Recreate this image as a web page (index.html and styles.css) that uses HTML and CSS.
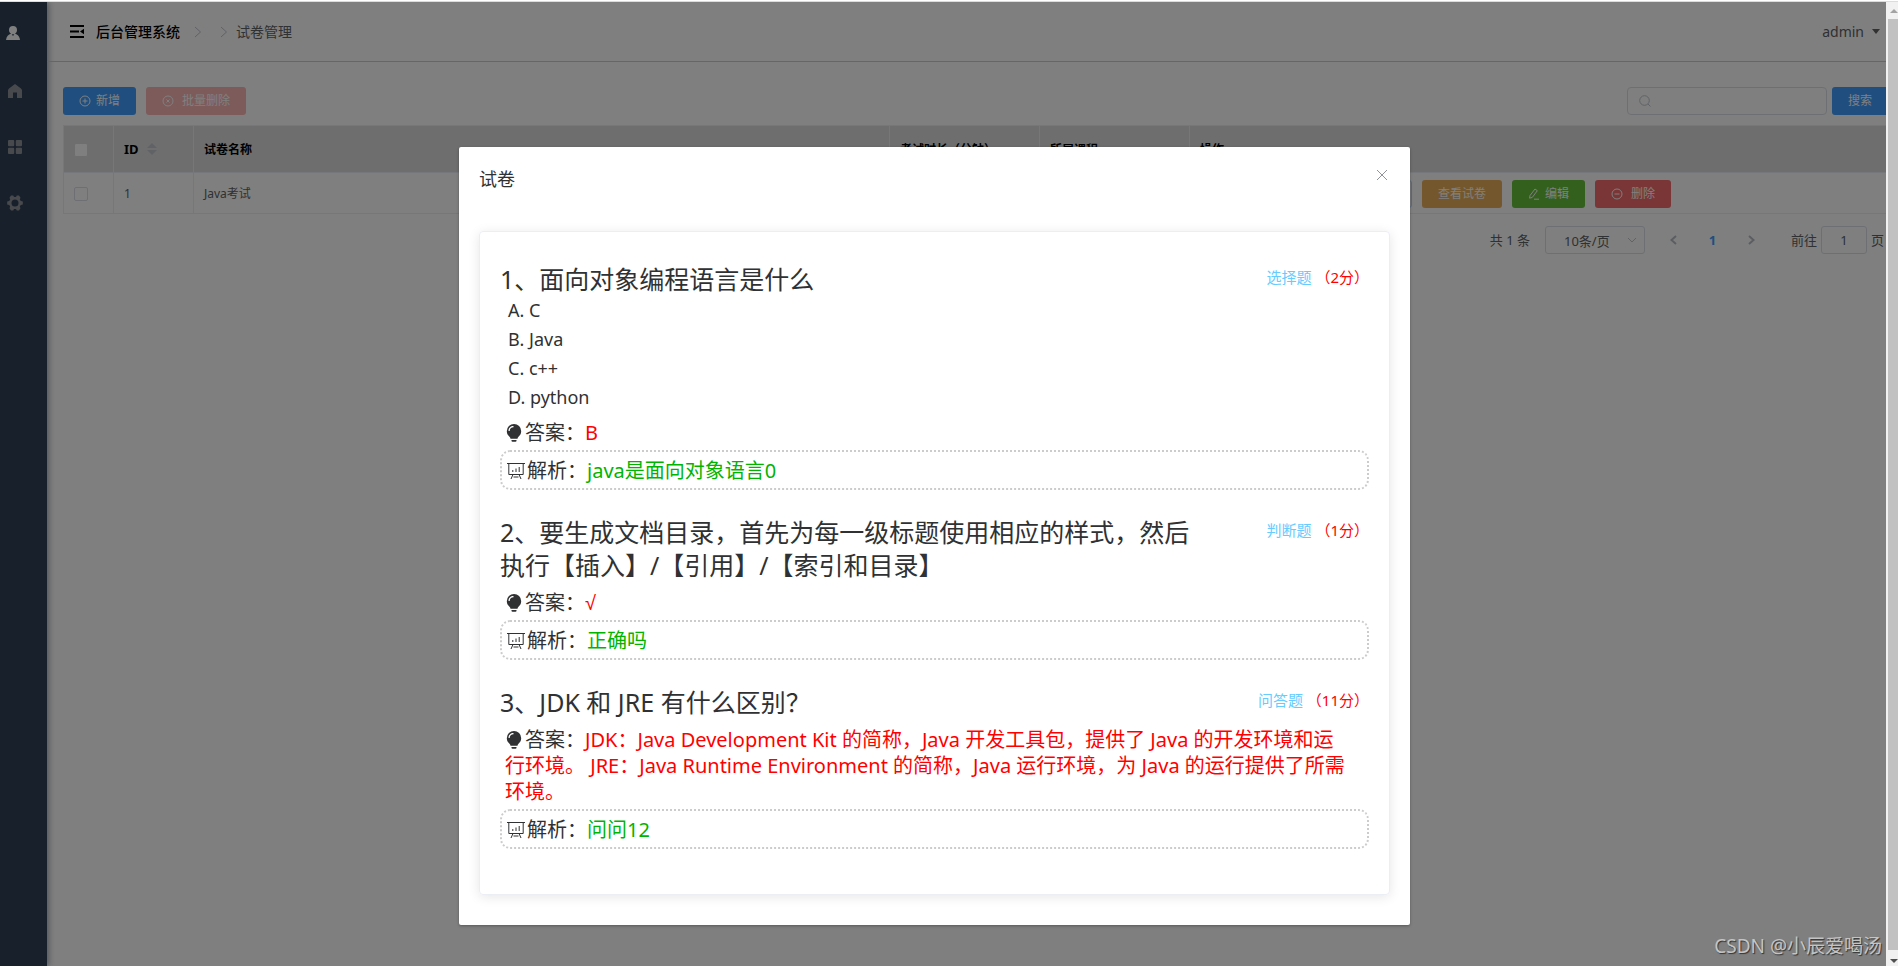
FILE: index.html
```html
<!DOCTYPE html>
<html lang="zh-CN">
<head>
<meta charset="utf-8">
<title>后台管理系统</title>
<link rel="stylesheet" href="styles.css">
</head>
<body>
<div class="window">
  <div class="app">
    <nav class="sidebar" aria-label="主菜单">
      <a class="side-link side-user" href="#" aria-label="用户"><svg width="14" height="14" viewBox="0 0 14 14"><path d="M7 0a4 4 0 0 1 4 4c0 1.600-.8 3-2 3.800 2.600.7 4.500 2.300 5 6.200H0c.5-3.900 2.400-5.500 5-6.200C3.800 7 3 5.600 3 4a4 4 0 0 1 4-4zM5.700 8.200L7 10l1.300-1.800z" fill-rule="evenodd"/></svg></a>
      <a class="side-link" href="#" aria-label="首页"><svg width="14" height="14" viewBox="0 0 14 14"><path d="M7 0l6 4.500 1 1.500v8H9V8.500H5V14H0V6l1-1.500z"/></svg></a>
      <a class="side-link" href="#" aria-label="菜单"><svg width="14" height="14" viewBox="0 0 14 14"><path d="M1 0h4.200q1 0 1 1v4.200q0 1-1 1H1q-1 0-1-1V1q0-1 1-1zM8.800 0H13q1 0 1 1v4.200q0 1-1 1H8.800q-1 0-1-1V1q0-1 1-1zM1 7.800h4.200q1 0 1 1V13q0 1-1 1H1q-1 0-1-1V8.800q0-1 1-1zM8.800 7.800H13q1 0 1 1V13q0 1-1 1H8.800q-1 0-1-1V8.800q0-1 1-1z"/></svg></a>
      <a class="side-link side-gear" href="#" aria-label="设置"><svg width="16" height="16" viewBox="0 0 16 16"><path fill-rule="evenodd" d="M4 .5h2.200L7 2h2l.8-1.500H12l1.500 2.300-.7 1.700 1 1.500 2 .5v3l-2 .5-1 1.500.7 1.700L12 15.500H9.800L9 14H7l-.8 1.500H4l-1.500-2.300.7-1.700-1-1.500-2-.5v-3l2-.5 1-1.500-.7-1.700zM8 4.500a3.500 3.500 0 1 0 0 7 3.500 3.500 0 0 0 0-7z"/></svg></a>
    </nav>

    <div class="main">
      <header class="topbar">
        <button class="fold" type="button" aria-label="折叠菜单"><svg width="14" height="13" viewBox="0 0 14 13"><path d="M0 0h14v2H0zM0 5.500h9v2H0zM0 11h14v2H0zM14 3.800v5.400L10 6.500z"/></svg></button>
        <nav class="crumbs" aria-label="面包屑">
          <a class="crumb-home" href="#">后台管理系统</a>
          <svg class="crumb-sep" width="8" height="12" viewBox="0 0 8 12"><path d="M1 1l5.500 5L1 11"/></svg>
          <svg class="crumb-sep" width="8" height="12" viewBox="0 0 8 12"><path d="M1 1l5.500 5L1 11"/></svg>
          <span>试卷管理</span>
        </nav>
        <button class="account" type="button">admin<i class="caret"></i></button>
      </header>

      <main class="content">
        <div class="toolbar">
          <button class="btn btn-primary" type="button"><svg class="ico" viewBox="0 0 12 12"><circle cx="6" cy="6" r="5"/><path d="M6 3.500v5M3.500 6h5"/></svg>新增</button>
          <button class="btn btn-muted" type="button" disabled><svg class="ico" viewBox="0 0 12 12"><circle cx="6" cy="6" r="5"/><path d="M4.500 4.500l3 3M7.500 4.500l-3 3"/></svg><span class="spaced">批量删除</span></button>
          <form class="search">
            <label class="search-box"><svg class="ico" viewBox="0 0 12 12"><circle cx="5.500" cy="5.500" r="4.800"/><path d="M9 9l2.500 2.500"/></svg><input type="text" aria-label="搜索试卷"></label>
            <button class="btn btn-primary" type="button">搜索</button>
          </form>
        </div>

        <table class="grid">
          <colgroup><col class="c-check"><col class="c-id"><col class="c-name"><col class="c-mid"><col class="c-mid"><col class="c-act"></colgroup>
          <thead>
            <tr>
              <th><input class="check check-all" type="checkbox" aria-label="全选"></th>
              <th><span class="sortable">ID<span class="sort"><i class="up"></i><i class="down"></i></span></span></th>
              <th>试卷名称</th>
              <th>考试时长（分钟）</th>
              <th>所属课程</th>
              <th>操作</th>
            </tr>
          </thead>
          <tbody>
            <tr>
              <td><input class="check" type="checkbox" aria-label="选择 Java考试"></td>
              <td>1</td>
              <td>Java考试</td>
              <td></td>
              <td></td>
              <td>
                <div class="actions">
                  <button class="btn btn-plain" type="button" aria-label="题目管理"></button>
                  <button class="btn btn-warning" type="button">查看试卷</button>
                  <button class="btn btn-success" type="button"><svg class="ico" viewBox="0 0 12 12"><path d="M2 7.500L7 1l2.300 1.700L4.300 9.400l-2.700.8zM6 11.200h5"/></svg>编辑</button>
                  <button class="btn btn-danger" type="button"><svg class="ico" viewBox="0 0 12 12"><circle cx="6" cy="6" r="5"/><path d="M3.500 6h5"/></svg><span class="spaced">删除</span></button>
                </div>
              </td>
            </tr>
          </tbody>
        </table>

        <div class="pager">
          <span class="total">共 1 条</span>
          <span class="size"><select aria-label="每页条数"><option>10条/页</option></select><svg width="10" height="6" viewBox="0 0 10 6"><path d="M1 1l4 4 4-4"/></svg></span>
          <button class="page-btn" type="button" aria-label="上一页"><svg width="7" height="10" viewBox="0 0 7 10"><path d="M6 1L1.500 5 6 9"/></svg></button>
          <button class="page-btn current" type="button">1</button>
          <button class="page-btn" type="button" aria-label="下一页"><svg width="7" height="10" viewBox="0 0 7 10"><path d="M1 1l4.500 4L1 9"/></svg></button>
          <label class="jump">前往<input type="text" value="1">页</label>
        </div>
      </main>
    </div>

    <div class="mask">
      <section class="dialog" role="dialog" aria-labelledby="dialog-title">
        <header class="dialog-head">
          <h2 id="dialog-title">试卷</h2>
          <button class="close" type="button" aria-label="关闭"><svg width="12" height="12" viewBox="0 0 12 12"><path d="M1 1l10 10M11 1L1 11"/></svg></button>
        </header>
        <div class="dialog-body">
          <div class="paper">

            <article class="question">
              <div class="stem-row">
                <h3 class="stem">1、面向对象编程语言是什么</h3>
                <p class="meta"><span class="kind">选择题</span> <span class="score">（2分）</span></p>
              </div>
              <ul class="options"><li>A. C</li><li>B. Java</li><li>C. c++</li><li>D. python</li></ul>
              <p class="answer"><svg class="bulb" viewBox="0 0 16 18"><path fill-rule="evenodd" d="M8 0a7.200 7.200 0 0 1 7.200 7.200c0 2.800-1.600 4.400-2.700 5.500-.6.700-1 1.400-1 2.100h-7c0-.7-.4-1.400-1-2.100C2.400 11.600.8 10 .8 7.200A7.200 7.200 0 0 1 8 0zM7.500 2C4.500 2 2.500 4 2.500 7h1.200c0-2.200 1.500-3.700 3.800-3.800zM5.500 16h5v.8q0 1-1 1h-3q-1 0-1-1z"/></svg>答案：<span class="value">B</span></p>
              <p class="analysis"><svg class="board" viewBox="0 0 18 18"><path d="M0 1.500h18M1.800 1.500v11h14.400v-11M6 12.500l-2 4.500M12 12.500l2 4.500M6.500 15h5M5.800 10V8M9 10V6.500M12.200 10V5"/></svg>解析：<span class="value">java是面向对象语言0</span></p>
            </article>

            <article class="question">
              <div class="stem-row">
                <h3 class="stem">2、要生成文档目录，首先为每一级标题使用相应的样式，然后执行【插入】/【引用】/【索引和目录】</h3>
                <p class="meta"><span class="kind">判断题</span> <span class="score">（1分）</span></p>
              </div>
              <p class="answer"><svg class="bulb" viewBox="0 0 16 18"><path fill-rule="evenodd" d="M8 0a7.200 7.200 0 0 1 7.200 7.200c0 2.800-1.600 4.400-2.700 5.500-.6.700-1 1.400-1 2.100h-7c0-.7-.4-1.400-1-2.100C2.400 11.600.8 10 .8 7.200A7.200 7.200 0 0 1 8 0zM7.500 2C4.500 2 2.500 4 2.500 7h1.200c0-2.200 1.500-3.700 3.800-3.800zM5.500 16h5v.8q0 1-1 1h-3q-1 0-1-1z"/></svg>答案：<span class="value mark">√</span></p>
              <p class="analysis"><svg class="board" viewBox="0 0 18 18"><path d="M0 1.500h18M1.800 1.500v11h14.400v-11M6 12.500l-2 4.500M12 12.500l2 4.500M6.500 15h5M5.800 10V8M9 10V6.500M12.200 10V5"/></svg>解析：<span class="value">正确吗</span></p>
            </article>

            <article class="question">
              <div class="stem-row">
                <h3 class="stem">3、JDK 和 JRE 有什么区别？</h3>
                <p class="meta"><span class="kind">问答题</span> <span class="score">（11分）</span></p>
              </div>
              <p class="answer"><svg class="bulb" viewBox="0 0 16 18"><path fill-rule="evenodd" d="M8 0a7.200 7.200 0 0 1 7.200 7.200c0 2.800-1.600 4.400-2.700 5.500-.6.700-1 1.400-1 2.100h-7c0-.7-.4-1.400-1-2.100C2.400 11.600.8 10 .8 7.200A7.200 7.200 0 0 1 8 0zM7.500 2C4.500 2 2.500 4 2.500 7h1.200c0-2.200 1.500-3.700 3.800-3.800zM5.500 16h5v.8q0 1-1 1h-3q-1 0-1-1z"/></svg>答案：<span class="value">JDK：Java Development Kit 的简称，Java 开发工具包，提供了 Java 的开发环境和运行环境。 JRE：Java Runtime Environment 的简称，Java 运行环境，为 Java 的运行提供了所需环境。</span></p>
              <p class="analysis"><svg class="board" viewBox="0 0 18 18"><path d="M0 1.500h18M1.800 1.500v11h14.400v-11M6 12.500l-2 4.500M12 12.500l2 4.500M6.500 15h5M5.800 10V8M9 10V6.500M12.200 10V5"/></svg>解析：<span class="value">问问12</span></p>
            </article>

          </div>
        </div>
      </section>
    </div>
    <span class="watermark">CSDN @小辰爱喝汤</span>
  </div>

  <div class="scrollbar" aria-hidden="true">
    <i class="arrow-up"></i>
    <span class="thumb"></span>
    <i class="arrow-down"></i>
  </div>
</div>
</body>
</html>
```
FILE: styles.css
```css
* { box-sizing: border-box; }

body {
  margin: 0;
  font-family: "Noto Sans", "Noto Sans CJK SC", sans-serif;
  font-size: 14px;
  color: #606266;
  background: #fff;
}

h2, h3, p, ul { margin: 0; padding: 0; font-weight: 400; }
ul { list-style: none; }
a { color: inherit; text-decoration: none; }
button, input, select { font: inherit; color: inherit; }
button { padding: 0; border: 0; background: none; }
svg { flex: none; }

.window {
  display: flex;
  height: 100vh;
  padding-top: 2px;
  background: linear-gradient(#fff 1px, #dcdcdc 1px, #dcdcdc 2px, #fff 2px);
  overflow: hidden;
}

.app { position: relative; flex: 1; display: flex; min-width: 0; overflow: hidden; }

/* sidebar */
.sidebar {
  width: 47px;
  padding: 0 8px;
  background: #304156;
  box-shadow: 2px 0 6px rgba(0, 21, 41, .35);
}
.side-link { display: flex; align-items: center; height: 56px; }
.side-link svg { fill: #909399; }
.side-user { height: 61px; margin-left: -2px; }
.side-user svg { fill: #fff; }
.side-gear { margin-left: -1px; }

/* top bar */
.main { flex: 1; min-width: 0; }
.topbar {
  display: flex;
  align-items: center;
  height: 60px;
  padding: 0 6px 0 23px;
  border-bottom: 1px solid #ccc;
}
.fold { display: flex; margin-right: 12px; fill: #000; }
.crumbs { display: flex; align-items: center; line-height: 20px; }
.crumb-home { color: #000; font-weight: 500; margin-right: 14px; }
.crumb-sep { fill: none; stroke: #c0c4cc; margin-right: 18px; }
.crumb-sep + span { margin-left: -10px; }
.account { display: flex; align-items: center; gap: 8px; margin-left: auto; font-size: 14px; }
.caret { border: 4px solid transparent; border-top: 5px solid #606266; border-bottom: 0; }

.content { padding: 25px 0 0 16px; }

/* buttons */
.btn {
  display: inline-flex;
  align-items: center;
  justify-content: center;
  gap: 5px;
  height: 28px;
  padding: 0 16px;
  border-radius: 3px;
  font-size: 12px;
  line-height: 16px;
  color: #fff;
  white-space: nowrap;
}
.ico { width: 12px; height: 12px; fill: none; stroke: currentColor; }
.btn-primary { background: #409eff; }
.btn-muted { background: #fab6b6; }
.btn-warning { background: #e9ae5b; }
.btn-success { background: #67c23a; }
.btn-danger { background: #f56c6c; }
.btn-plain { width: 80px; background: #ecf5ff; border: 1px solid #b3d8ff; }
.spaced { margin-left: 3px; }

.toolbar { display: flex; gap: 10px; margin-bottom: 10px; }
.search { display: flex; gap: 5px; margin: 0 -2px 0 auto; }
.search-box {
  display: flex;
  align-items: center;
  width: 200px;
  padding-left: 11px;
  border: 1px solid #dcdfe6;
  border-radius: 4px;
  color: #c0c4cc;
}
.search-box input { flex: 1; min-width: 0; border: 0; background: none; outline: 0; }

/* table */
.grid {
  width: 100%;
  table-layout: fixed;
  border-collapse: separate;
  border-spacing: 0;
  border-top: 1px solid #ebeef5;
  border-left: 1px solid #ebeef5;
  font-size: 12px;
  line-height: 22px;
}
.c-check { width: 50px; }
.c-id { width: 80px; }
.c-name { width: auto; }
.c-mid { width: 150px; }
.c-act { width: 696px; }
.grid th, .grid td {
  padding: 1px 10px 0;
  border-right: 1px solid #ebeef5;
  border-bottom: 1px solid #ebeef5;
  text-align: left;
  white-space: nowrap;
}
.grid th:last-child, .grid td:last-child { border-right: 0; }
.grid th { height: 47px; background: #ddd; color: #000; font-weight: 700; }
.grid td { height: 41px; }
.check {
  appearance: none;
  display: block;
  width: 14px;
  height: 14px;
  margin: 0;
  border: 1px solid #dcdfe6;
  border-radius: 2px;
  background: #fff;
}
.check-all { border-color: #ddd; }
.sortable { display: flex; align-items: center; gap: 8px; padding-bottom: 2px; font-size: 13px; }
.sort { display: flex; flex-direction: column; gap: 2px; }
.up, .down { border: 5px solid transparent; }
.up { border-top: 0; border-bottom-color: #c0c4cc; }
.down { border-bottom: 0; border-top-color: #c0c4cc; }
.actions { display: flex; gap: 10px; padding-left: 132px; }

/* pagination */
.pager {
  display: flex;
  align-items: center;
  justify-content: flex-end;
  margin-top: 12px;
  padding-right: 2px;
  font-size: 13px;
  line-height: 28px;
}
.size { position: relative; width: 100px; margin: 0 9px 0 15px; }
.size select {
  display: block;
  width: 100%;
  height: 28px;
  padding: 0 30px 0 18px;
  appearance: none;
  border: 1px solid #dcdfe6;
  border-radius: 3px;
  background: #fff;
}
.size svg { position: absolute; right: 8px; top: 11px; fill: none; stroke: #c0c4cc; }
.page-btn { width: 39px; height: 28px; fill: none; stroke: #b8bbc2; stroke-width: 2; }
.current { color: #409eff; font-weight: 700; }
.jump { display: flex; gap: 4px; margin-left: 20px; }
.jump input {
  width: 46px;
  height: 28px;
  border: 1px solid #dcdfe6;
  border-radius: 3px;
  background: #fff;
  text-align: center;
}

/* dialog */
.mask {
  position: absolute;
  inset: 0;
  padding: 145px 17px 0 0;
  background: rgba(0, 0, 0, .5);
}
.dialog {
  width: 951px;
  max-width: 100%;
  margin: 0 auto;
  background: #fff;
  border-radius: 2px;
  box-shadow: 0 1px 3px rgba(0, 0, 0, .3);
  color: #303133;
}
.dialog-head { display: flex; justify-content: space-between; padding: 20px 20px 10px; }
.dialog-head h2 { font-size: 18px; line-height: 24px; }
.close { display: flex; padding: 2px; fill: none; stroke: #909399; }
.dialog-body { padding: 30px 20px; }
.paper {
  display: flex;
  flex-direction: column;
  gap: 26px;
  padding: 31px 20px 45px;
  border: 1px solid #ebeef5;
  border-radius: 4px;
  box-shadow: 0 2px 12px rgba(0, 0, 0, .1);
}
.stem-row { display: flex; justify-content: space-between; }
.stem { width: 80%; font-size: 25px; line-height: 33px; }
.meta { font-size: 15px; line-height: 28px; white-space: nowrap; }
.kind { color: #66ccff; }
.score { color: #f00; }
.options { padding-left: 8px; font-size: 18px; line-height: 29px; }
.answer, .analysis { font-size: 20px; line-height: 26px; }
.answer { padding: 8px 20px 4px 5px; }
.answer .value { color: #f00; }
.answer .mark { font-family: "Liberation Sans", sans-serif; }
.bulb { width: 16px; height: 18px; margin: 0 3px 0 1px; vertical-align: -2px; fill: #303133; }
.analysis { padding: 6px 5px 4px; border: 2px dotted #ccc; border-radius: 10px; }
.analysis .value { color: #00b400; }
.board { width: 18px; height: 18px; margin-right: 2px; vertical-align: -2px; fill: none; stroke: #303133; }

.watermark {
  position: absolute;
  right: 4px;
  bottom: 6px;
  font-size: 19px;
  line-height: 28px;
  color: #c4c4c4;
  text-shadow: 1px 1px 1px #333;
}

/* window scrollbar */
.scrollbar {
  display: flex;
  flex-direction: column;
  align-items: flex-end;
  width: 12px;
  background: #f1f1f1;
  overflow: hidden;
}
.thumb { flex: 1; width: 10px; background: #c1c1c1; }
.arrow-up, .arrow-down { width: 8px; border: 4px solid transparent; }
.arrow-up { margin: 7px 0 6px; border-top: 0; border-bottom-color: #a3a3a3; }
.arrow-down { margin: 9px 0 3px; border-bottom: 0; border-top-color: #505050; }
```
